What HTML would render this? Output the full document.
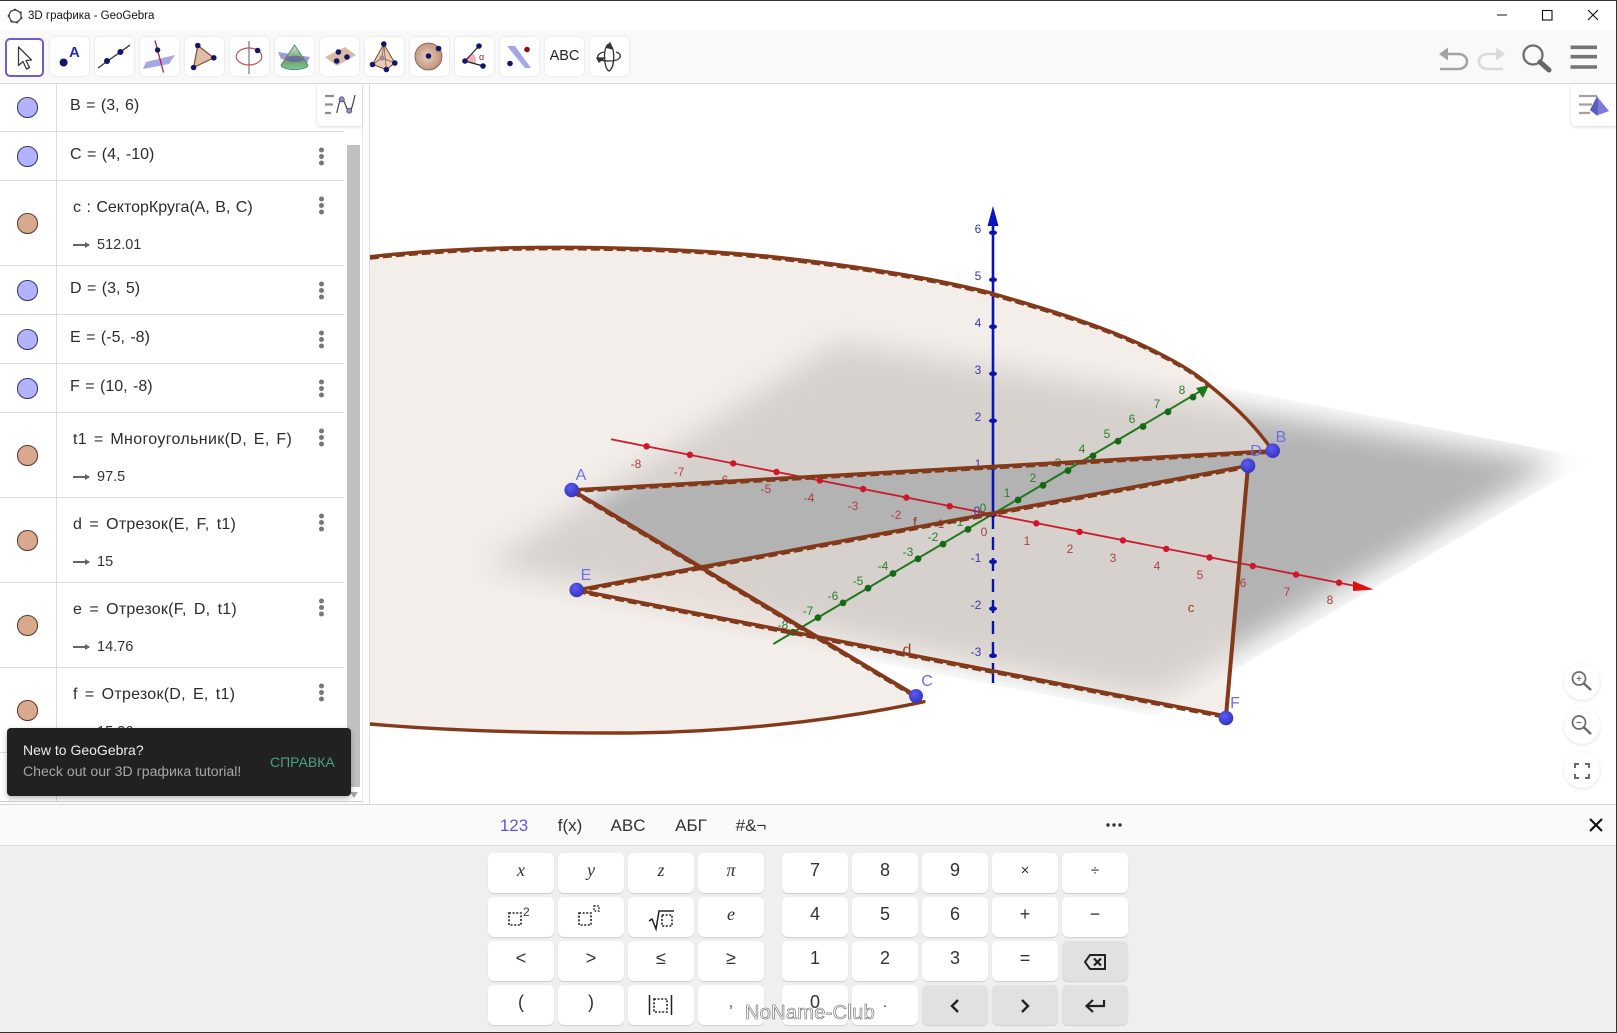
<!DOCTYPE html>
<html><head><meta charset="utf-8"><title>3D графика - GeoGebra</title>
<style>
html,body{margin:0;padding:0;background:#fff;width:1617px;height:1033px;overflow:hidden}
body{position:relative;font-family:"Liberation Sans",sans-serif;color:#222}
.a{position:absolute}
#tb{position:absolute;left:0;top:30px;width:1617px;height:53px;background:#f9f9f9;border-bottom:1px solid #dcdcdc}
.btn{position:absolute;top:37px;width:39px;height:39px;background:#fff;border-radius:5px;box-shadow:0 0 2px rgba(0,0,0,.14)}
.btn svg{position:absolute;left:0;top:0}
.row{position:absolute;left:0;width:344px;border-bottom:1px solid #dcdcdc;background:#fff}
.c{position:absolute;left:17px;width:18.5px;height:18.5px;border-radius:50%;border:1px solid #2f2f80;background:#b3b3fb}
.c.b{background:#d9a98f;border-color:#5a3524}
.t{position:absolute;font-size:16px;line-height:18px;white-space:nowrap;color:#2c2c2c;transform:translateY(-50%);word-spacing:1px;margin-top:1px}
.v{position:absolute;left:97px;font-size:14.5px;line-height:18px;color:#333;transform:translateY(-50%);margin-top:1px}
.ar{position:absolute;left:73px;width:16px;height:2px;background:#666}
.ar:after{content:"";position:absolute;right:-1px;top:-2px;border-left:5px solid #666;border-top:3px solid transparent;border-bottom:3px solid transparent}
.m{position:absolute;left:318.5px;width:5px;height:5px;border-radius:50%;background:#777;box-shadow:0 -6.5px 0 #777,0 6.5px 0 #777}
.k{position:absolute;width:66px;height:39.5px;background:#fff;border-radius:6px;box-shadow:0 1px 1px rgba(0,0,0,.14);text-align:center;line-height:35px;font-size:18px;color:#333}
.k svg{position:absolute;left:0;top:0}
.g{background:#e1e1e1}
.i{font-family:"Liberation Serif",serif;font-style:italic;font-size:18px}
.s{font-size:15px}
.tab{position:absolute;top:816px;font-size:17px;line-height:20px;color:#333;transform:translateX(-50%);white-space:nowrap}
.fab{position:absolute;width:36px;height:36px;border-radius:50%;background:#fff;box-shadow:0 1px 3px rgba(0,0,0,.12)}
svg text{font-family:"Liberation Sans",sans-serif}
</style></head><body>

<!-- Graphics view -->
<svg class="a" style="left:0;top:0" width="1617" height="1033" viewBox="0 0 1617 1033">
<defs>
<clipPath id="view"><rect x="370" y="84" width="1247" height="720"/></clipPath>
<clipPath id="pq"><polygon points="393,570 832,311 1593,459 1156,716"/></clipPath>
<filter id="bl" x="-20%" y="-30%" width="140%" height="160%"><feGaussianBlur stdDeviation="15"/></filter>
<radialGradient id="pt" cx="40%" cy="35%" r="70%"><stop offset="0" stop-color="#5c5cf0"/><stop offset="1" stop-color="#3232bc"/></radialGradient>
</defs>
<g clip-path="url(#view)">
<g clip-path="url(#pq)"><polygon filter="url(#bl)" fill="#b3b3b3" points="485,565 838,342 1560,462 1155,698"/></g>
<path d="M370,256.7C430,250 500,247 567.7,247.3C640,247.8 700,250 765.4,256C840,264 925,276 990,292.7C1060,313 1100,326 1138,343C1170,358 1195,372 1209,385C1240,410 1258,430 1272.7,450.7L571.7,490L916,700L924,701.7C830,722 720,733 616.7,733C530,733 440,730 370,724Z" fill="#eee3dd" fill-opacity=".62"/>
<polygon points="1248,465.7 576.7,590 1226,716" fill="#eee3dd" fill-opacity=".62"/>

<!-- y axis -->
<path d="M773.3,644L1199.5,391.7" stroke="#1e7a1e" stroke-width="2" fill="none"/>
<polygon points="1209,385 1196,388 1203,398" fill="#1a7a1a"/>
<g fill="#146914"><circle cx="793" cy="632.3" r="3.4"/><circle cx="818" cy="617.6" r="3.4"/><circle cx="843" cy="602.9" r="3.4"/><circle cx="868" cy="588.2" r="3.4"/><circle cx="893" cy="573.5" r="3.4"/><circle cx="918" cy="558.8" r="3.4"/><circle cx="943" cy="544.1" r="3.4"/><circle cx="968" cy="529.4" r="3.4"/><circle cx="1018" cy="500" r="3.4"/><circle cx="1043" cy="485.3" r="3.4"/><circle cx="1068" cy="470.6" r="3.4"/><circle cx="1093" cy="455.9" r="3.4"/><circle cx="1118" cy="441.2" r="3.4"/><circle cx="1143" cy="426.5" r="3.4"/><circle cx="1168" cy="411.8" r="3.4"/><circle cx="1193" cy="397.1" r="3.4"/></g>
<g font-size="12" fill="#2c7d2c" text-anchor="middle"><text x="783" y="629">-8</text><text x="808" y="615">-7</text><text x="833" y="600">-6</text><text x="858" y="585">-5</text><text x="883" y="570">-4</text><text x="908" y="556">-3</text><text x="933" y="541">-2</text><text x="958" y="526">-1</text><text x="1007" y="497">1</text><text x="1033" y="482">2</text><text x="1058" y="467">3</text><text x="1082" y="453">4</text><text x="1107" y="438">5</text><text x="1132" y="423">6</text><text x="1157" y="408">7</text><text x="1182" y="394">8</text><text x="983" y="512">0</text></g>

<!-- x axis -->
<path d="M611,439.3L1353,585.5" stroke="#c81e2c" stroke-width="1.8" fill="none"/>
<polygon points="1353,581 1373.5,589.5 1353,591" fill="#e01010"/>
<g fill="#d2152a"><circle cx="646.6" cy="446.3" r="3.2"/><circle cx="689.9" cy="454.8" r="3.2"/><circle cx="733.2" cy="463.4" r="3.2"/><circle cx="776.5" cy="472" r="3.2"/><circle cx="819.8" cy="480.5" r="3.2"/><circle cx="863.1" cy="489" r="3.2"/><circle cx="906.4" cy="497.6" r="3.2"/><circle cx="949.7" cy="506.2" r="3.2"/><circle cx="1036.3" cy="523.3" r="3.2"/><circle cx="1079.6" cy="531.8" r="3.2"/><circle cx="1122.9" cy="540.4" r="3.2"/><circle cx="1166.2" cy="548.9" r="3.2"/><circle cx="1209.5" cy="557.5" r="3.2"/><circle cx="1252.8" cy="566" r="3.2"/><circle cx="1296.1" cy="574.6" r="3.2"/><circle cx="1339" cy="582.7" r="3.2"/></g>
<g font-size="12" fill="#ad3f44" text-anchor="middle"><text x="636" y="468">-8</text><text x="679" y="476">-7</text><text x="723" y="484">-6</text><text x="766" y="493">-5</text><text x="809" y="502">-4</text><text x="853" y="510">-3</text><text x="896" y="519">-2</text><text x="939" y="528">-1</text><text x="984" y="536">0</text><text x="1027" y="545">1</text><text x="1070" y="553">2</text><text x="1113" y="562">3</text><text x="1157" y="570">4</text><text x="1200" y="579">5</text><text x="1243" y="587">6</text><text x="1287" y="596">7</text><text x="1330" y="604">8</text></g>

<!-- z axis -->
<path d="M993,225V514.7" stroke="#0a14b4" stroke-width="2.6"/>
<path d="M993,516V670" stroke="#0a14a4" stroke-width="2.4" stroke-dasharray="13,8"/>
<path d="M993,670V683" stroke="#0a14a4" stroke-width="2.4"/>
<polygon points="993,206 987.5,226 998.5,226" fill="#0a14c0"/>
<g fill="#0a14a8"><ellipse cx="993" cy="232.7" rx="4" ry="2.3"/><ellipse cx="993" cy="279.7" rx="4" ry="2.3"/><ellipse cx="993" cy="326.7" rx="4" ry="2.3"/><ellipse cx="993" cy="373.7" rx="4" ry="2.3"/><ellipse cx="993" cy="420.7" rx="4" ry="2.3"/><ellipse cx="993" cy="467.7" rx="4" ry="2.3"/><ellipse cx="993" cy="561.7" rx="4" ry="2.3"/><ellipse cx="993" cy="608.7" rx="4" ry="2.3"/><ellipse cx="993" cy="655.7" rx="4" ry="2.3"/><circle cx="993" cy="514.7" r="3"/></g>
<g font-size="12" fill="#3a3aa4" text-anchor="middle"><text x="978" y="233">6</text><text x="978" y="280">5</text><text x="978" y="327">4</text><text x="978" y="374">3</text><text x="978" y="421">2</text><text x="978" y="468">1</text><text x="977" y="515">0</text><text x="976" y="562">-1</text><text x="976" y="609">-2</text><text x="976" y="656">-3</text></g>

<!-- shape edges: dashed under-stroke then solid -->
<g fill="none" stroke="#7d3a18" stroke-width="2.2" stroke-dasharray="9,4" transform="translate(0,2)">
<path d="M370,256.7C430,250 500,247 567.7,247.3C640,247.8 700,250 765.4,256C840,264 925,276 990,292.7C1060,313 1100,326 1138,343C1170,358 1195,372 1209,385"/>
<path d="M571.7,490L1272.7,450.7"/><path d="M571.7,490L916,696"/><path d="M576.7,590L1248,465.7"/><path d="M576.7,590L1226,716"/>
</g>
<g fill="none" stroke="#83391a" stroke-width="3.4" stroke-linecap="round">
<path d="M370,256.7C430,250 500,247 567.7,247.3C640,247.8 700,250 765.4,256C840,264 925,276 990,292.7C1060,313 1100,326 1138,343C1170,358 1195,372 1209,385C1240,410 1258,430 1272.7,450.7"/>
<path d="M370,724C440,730 530,733 616.7,733C720,733 830,722 924,701.7"/>
<path d="M571.7,490L1272.7,450.7"/><path d="M571.7,490L916,696" stroke-width="4"/><path d="M576.7,590L1248,465.7"/><path d="M576.7,590L1226,716"/>
<path d="M1248,465.7L1226,716" stroke-width="4"/>
</g>

<!-- points -->
<circle cx="571.7" cy="490" r="7.3" fill="url(#pt)"/><circle cx="1272.7" cy="450.7" r="7.3" fill="url(#pt)"/><circle cx="916" cy="696" r="7" fill="url(#pt)"/><circle cx="1248" cy="465.7" r="7.3" fill="url(#pt)"/><circle cx="576.7" cy="590" r="7.3" fill="url(#pt)"/><circle cx="1226" cy="718" r="7.3" fill="url(#pt)"/>
<g font-size="16" fill="#6e6ee4" text-anchor="middle"><text x="581" y="480">A</text><text x="1281" y="442">B</text><text x="927" y="686">C</text><text x="1256" y="456">D</text><text x="586" y="580">E</text><text x="1235" y="708">F</text></g>
<g fill="#8c3d24" text-anchor="middle"><text x="1191" y="612" font-size="13">c</text><text x="907" y="655" font-size="16">d</text><text x="915" y="527" font-size="14">f</text></g>
</g>
</svg>

<!-- Title bar -->
<svg class="a" style="left:7px;top:8px" width="16" height="16" viewBox="0 0 16 16"><polygon points="8,1.5 13.5,4.5 14.5,10 10,14.5 4.5,13.5 1.5,8 3.5,3.5" fill="none" stroke="#444" stroke-width="1.3"/><g fill="#444"><circle cx="8" cy="1.8" r="1.2"/><circle cx="13.6" cy="4.6" r="1.2"/><circle cx="14.3" cy="10" r="1.2"/><circle cx="10" cy="14.3" r="1.2"/><circle cx="4.5" cy="13.5" r="1.2"/><circle cx="1.8" cy="8" r="1.2"/></g></svg>
<div class="a" style="left:28px;top:9px;font-size:11.5px;line-height:14px;color:#111">3D графика - GeoGebra</div>
<svg class="a" style="left:1490px;top:5px" width="115" height="20" viewBox="0 0 115 20"><path d="M7,10H17" stroke="#111" stroke-width="1"/><rect x="52.5" y="5.5" width="9.5" height="9.5" fill="none" stroke="#111" stroke-width="1.1"/><path d="M98,5L108,15M108,5L98,15" stroke="#111" stroke-width="1.1"/></svg>
<div class="a" style="left:0;top:0;width:1617px;height:1px;background:#333"></div>

<!-- Toolbar -->
<div id="tb"></div>
<div class="btn" style="left:5px;box-shadow:none;border:2px solid #6c5fc7;width:35px;height:35px;top:37.5px"><svg width="35" height="35" style="left:-2px;top:-2px;overflow:visible"><path d="M13.5,9V27.5L18,23.5L21.5,31L24.5,29.5L21,22.5L26.5,22Z" fill="#fff" stroke="#3a3a3a" stroke-width="1.3" stroke-linejoin="round"/></svg></div>
<div class="btn" style="left:50px"><svg width="39" height="39"><circle cx="13.6" cy="25.5" r="4" fill="#14146a"/><text x="19" y="20" font-size="15" font-weight="bold" fill="#2a2ac0">A</text></svg></div>
<div class="btn" style="left:95px"><svg width="39" height="39"><path d="M3,31L35,8" stroke="#333" stroke-width="1.3"/><circle cx="12" cy="24" r="3" fill="#14146a"/><circle cx="25.4" cy="15" r="3" fill="#14146a"/></svg></div>
<div class="btn" style="left:140px"><svg width="39" height="39"><polygon points="6,25 35,18 29,27 3,32" fill="#a6a6ea"/><path d="M15,3.5L23.5,35.5" stroke="#b01a4a" stroke-width="1.3"/><circle cx="17.6" cy="13" r="2.7" fill="#14146a"/></svg></div>
<div class="btn" style="left:185px"><svg width="39" height="39"><polygon points="12.8,8.5 28.8,20.8 8.6,30.5" fill="#e0bda8" stroke="#8a4a28" stroke-width="1.2"/><circle cx="12.8" cy="8.5" r="2.8" fill="#14146a"/><circle cx="28.8" cy="20.8" r="2.8" fill="#14146a"/><circle cx="8.6" cy="30.5" r="2.8" fill="#14146a"/></svg></div>
<div class="btn" style="left:230px"><svg width="39" height="39"><path d="M19,4V37" stroke="#9a9a9a" stroke-width="1.6"/><ellipse cx="19" cy="19.5" rx="12.8" ry="8.5" fill="none" stroke="#c25050" stroke-width="1.2"/><circle cx="27.6" cy="13.5" r="2.8" fill="#14146a"/></svg></div>
<div class="btn" style="left:275px"><svg width="39" height="39"><defs><linearGradient id="cg" x1="0" y1="0" x2="0" y2="1"><stop offset="0" stop-color="#cfe6cf"/><stop offset=".6" stop-color="#6aa07a"/><stop offset="1" stop-color="#79c987"/></linearGradient></defs><polygon points="3,15 35,20 32,26 6,22" fill="#9c9ce0"/><path d="M19.6,8L33,28C33,34 6,34 6,28Z" fill="url(#cg)" stroke="#4f7a58" stroke-width=".8"/><ellipse cx="19.6" cy="22" rx="8.5" ry="3" fill="#5a76a8" stroke="#b06060" stroke-width=".8"/></svg></div>
<div class="btn" style="left:320px"><svg width="39" height="39"><polygon points="5,20 25,10 36,18 17,29" fill="#d9bca6"/><circle cx="18.4" cy="15" r="2.8" fill="#14146a"/><circle cx="27" cy="20" r="2.8" fill="#14146a"/><circle cx="16.7" cy="24" r="2.8" fill="#14146a"/></svg></div>
<div class="btn" style="left:365px"><svg width="39" height="39"><polygon points="18.8,7 7.5,27.5 21.4,32.5 29.8,26" fill="#e6cdb9" stroke="#7a4a2a" stroke-width="1"/><path d="M18.8,7L17,21L7.5,27.5M17,21L29.8,26M18.8,7L21.4,32.5" stroke="#8a5a3a" stroke-width=".8" fill="none"/><circle cx="17" cy="21" r="2.6" fill="#a08a90"/><circle cx="18.8" cy="7" r="2.8" fill="#14146a"/><circle cx="7.5" cy="27.5" r="2.8" fill="#14146a"/><circle cx="29.8" cy="26" r="2.8" fill="#14146a"/><circle cx="21.4" cy="32.5" r="2.8" fill="#14146a"/></svg></div>
<div class="btn" style="left:410px"><svg width="39" height="39"><defs><radialGradient id="sg" cx="45%" cy="50%" r="60%"><stop offset="0" stop-color="#e8cdbd"/><stop offset="1" stop-color="#b98a72"/></radialGradient></defs><circle cx="18.5" cy="19.5" r="13.5" fill="url(#sg)" stroke="#7a5a4a" stroke-width=".8"/><circle cx="18.5" cy="19" r="2.8" fill="#14146a"/><circle cx="28.6" cy="11.5" r="2.8" fill="#14146a"/></svg></div>
<div class="btn" style="left:455px"><svg width="39" height="39"><path d="M10,24L17.5,16A11,11 0 0 1 20.5,26.5Z" fill="#f2b0b8"/><path d="M24,9L10,24L28,29" fill="none" stroke="#222" stroke-width="1.2"/><circle cx="24" cy="9" r="2.8" fill="#14146a"/><circle cx="10" cy="24" r="2.8" fill="#14146a"/><circle cx="28" cy="29" r="2.8" fill="#14146a"/><text x="24" y="23" font-size="9" fill="#b02020">α</text></svg></div>
<div class="btn" style="left:500px"><svg width="39" height="39"><polygon points="7,9 15,9 31,31 25,31" fill="#a6a6e6"/><circle cx="27" cy="12.5" r="2.8" fill="#8a1020"/><circle cx="10" cy="26.5" r="2.8" fill="#14146a"/></svg></div>
<div class="btn" style="left:545px;text-align:center;line-height:38px;font-size:14.5px;color:#222">ABC</div>
<div class="btn" style="left:590px"><svg width="39" height="39" fill="none" stroke="#333" stroke-width="1.3"><path d="M14,15C5,17 5,24 19,24C32,24 33,17 26,15"/><path d="M19,7C13,8 13,31 19,34C25,31 25,12 21,9"/><path d="M20,6L22.5,12L17,10.5Z" fill="#333"/><path d="M7,21L14,21L9,25Z" fill="#333"/></svg></div>

<svg class="a" style="left:1435px;top:40px" width="175" height="38" viewBox="0 0 175 38">
<path d="M6,14H23C35,14 35,29 23,29H5" fill="none" stroke="#a3a3a3" stroke-width="2.6"/><polygon points="4,14 13,7.5 13,20.5" fill="#a3a3a3"/>
<path d="M68,14H53C41,14 41,29 53,29H68" fill="none" stroke="#dadada" stroke-width="2.6"/><polygon points="70,14 61,7.5 61,20.5" fill="#dadada"/>
<circle cx="98" cy="15" r="9.5" fill="none" stroke="#6e6e6e" stroke-width="2.3"/><path d="M105,22L114,30" stroke="#666" stroke-width="5" stroke-linecap="round"/>
<path d="M135.5,7.3H162M135.5,16.7H162M135.5,27H162" stroke="#757575" stroke-width="3.6"/>
</svg>

<!-- Algebra view -->
<div class="a" style="left:369px;top:84px;width:1px;height:720px;background:#dedede"></div>
<div class="a" style="left:362px;top:84px;width:1px;height:720px;background:#e8e8e8"></div>
<div class="a" style="left:0;top:84px;width:345px;height:717px;background:#fff"></div>
<div class="row" style="top:84px;height:47px"></div>
<div class="row" style="top:132px;height:48px"></div>
<div class="row" style="top:181px;height:84px"></div>
<div class="row" style="top:266px;height:48px"></div>
<div class="row" style="top:315px;height:48px"></div>
<div class="row" style="top:364px;height:48px"></div>
<div class="row" style="top:413px;height:84px"></div>
<div class="row" style="top:498px;height:84px"></div>
<div class="row" style="top:583px;height:84px"></div>
<div class="row" style="top:668px;height:84px"></div>
<div class="a" style="left:56px;top:84px;width:1px;height:717px;background:#dcdcdc"></div>
<div class="a" style="left:346.5px;top:145px;width:13.5px;height:642px;background:#c0c0c0"></div>
<div class="a" style="left:0;top:801px;width:362px;height:1px;background:#cfcfcf"></div>
<svg class="a" style="left:349px;top:791px" width="10" height="8"><polygon points="1,1 9,1 5,7" fill="#a8a8a8"/></svg>

<div class="c" style="top:97px"></div><div class="t" style="left:70px;top:105px">B = (3, 6)</div>
<div class="c" style="top:146px"></div><div class="t" style="left:70px;top:154px">C = (4, -10)</div><div class="m" style="top:153.5px"></div>
<div class="c b" style="top:213px"></div><div class="t" style="left:73px;top:206.5px">c : СекторКруга(A, B, C)</div><div class="ar" style="top:244px"></div><div class="v" style="top:244px">512.01</div><div class="m" style="top:202.5px"></div>
<div class="c" style="top:280px"></div><div class="t" style="left:70px;top:288px">D = (3, 5)</div><div class="m" style="top:287.5px"></div>
<div class="c" style="top:329px"></div><div class="t" style="left:70px;top:337px">E = (-5, -8)</div><div class="m" style="top:336.5px"></div>
<div class="c" style="top:378px"></div><div class="t" style="left:70px;top:386px">F = (10, -8)</div><div class="m" style="top:385.5px"></div>
<div class="c b" style="top:445px"></div><div class="t" style="left:73px;top:438.5px;word-spacing:2px;letter-spacing:.35px">t1 = Многоугольник(D, E, F)</div><div class="ar" style="top:476px"></div><div class="v" style="top:475.5px">97.5</div><div class="m" style="top:435px"></div>
<div class="c b" style="top:530px"></div><div class="t" style="left:73px;top:523.5px;word-spacing:2.5px;letter-spacing:.25px">d = Отрезок(E, F, t1)</div><div class="ar" style="top:561px"></div><div class="v" style="top:561px">15</div><div class="m" style="top:519.5px"></div>
<div class="c b" style="top:615px"></div><div class="t" style="left:73px;top:608.5px;word-spacing:2.5px;letter-spacing:.25px">e = Отрезок(F, D, t1)</div><div class="ar" style="top:646px"></div><div class="v" style="top:646px">14.76</div><div class="m" style="top:604.5px"></div>
<div class="c b" style="top:700px"></div><div class="t" style="left:73px;top:693.5px;word-spacing:2.5px;letter-spacing:.25px">f = Отрезок(D, E, t1)</div><div class="v" style="top:731px">15.26</div><div class="m" style="top:689.5px"></div>

<!-- view-toggle buttons -->
<div class="a" style="left:317px;top:84px;width:45px;height:42px;background:#fff;border-radius:0 0 0 5px;box-shadow:0 1px 3px rgba(0,0,0,.16)"></div>
<svg class="a" style="left:317px;top:84px" width="45" height="42" viewBox="317 84 45 42"><path d="M325,96H334M325,104.5H333M325,113H331" stroke="#8c8c8c" stroke-width="2.2"/><path d="M336.7,113C338.5,106 339.5,99.3 341.7,99.3C345,99.3 346,110.7 349.3,110.7C352,110.7 353,103 355,95" fill="none" stroke="#444" stroke-width="1.2"/><circle cx="341.7" cy="99.3" r="2.6" fill="#8a8ad0" stroke="#444" stroke-width=".6"/><circle cx="349.3" cy="110.7" r="2.6" fill="#8a8ad0" stroke="#444" stroke-width=".6"/></svg>
<div class="a" style="left:1571px;top:84px;width:46px;height:42px;background:#fff;border-radius:0 0 0 5px;box-shadow:0 1px 3px rgba(0,0,0,.16)"></div>
<svg class="a" style="left:1571px;top:84px" width="46" height="42" viewBox="1571 84 46 42"><path d="M1579,96H1597M1579,104.5H1592M1579,113H1590" stroke="#a3a3a3" stroke-width="2.2"/><polygon points="1597,96.5 1590,110 1597,115.5 1609,111" fill="#7c7cd8"/><path d="M1597,96.5L1597,115.5" stroke="#4d4da8" stroke-width="1"/><polygon points="1597,96.5 1590,110 1597,115.5" fill="#5c5cc0"/></svg>

<!-- zoom buttons -->
<div class="fab" style="left:1564px;top:664px"></div><div class="fab" style="left:1564px;top:708px"></div><div class="fab" style="left:1564px;top:752px"></div>
<svg class="a" style="left:1564px;top:664px" width="36" height="124" viewBox="0 0 36 124" fill="none" stroke="#6a6a6a">
<circle cx="15" cy="14.5" r="6.5" stroke-width="1.7"/><path d="M20,19.5L27,26" stroke-width="2.4"/><path d="M12.5,14.5H17.5M15,12V17" stroke-width="1"/>
<circle cx="15" cy="58.5" r="6.5" stroke-width="1.7"/><path d="M20,63.5L27,70" stroke-width="2.4"/><path d="M12.5,58.5H17.5" stroke-width="1.2"/>
<path d="M11,104V100H15M21,100H25V104M25,110V114H21M15,114H11V110" stroke-width="2"/></svg>

<!-- Snackbar -->
<div class="a" style="left:7px;top:728px;width:344px;height:68px;background:#212121;border-radius:4px;box-shadow:0 2px 6px rgba(0,0,0,.3)"></div>
<div class="a" style="left:23px;top:742px;font-size:14px;line-height:17px;color:#ececec">New to GeoGebra?</div>
<div class="a" style="left:23px;top:763px;font-size:14.1px;line-height:17px;color:#a6a6a6">Check out our 3D графика tutorial!</div>
<div class="a" style="left:270px;top:754px;font-size:14px;line-height:17px;color:#46a184">СПРАВКА</div>

<!-- Keyboard -->
<div class="a" style="left:0;top:804px;width:1617px;height:1px;background:#d6d6d6"></div>
<div class="a" style="left:0;top:805px;width:1617px;height:40px;background:#fafafa;border-bottom:1px solid #dcdcdc"></div>
<div class="a" style="left:0;top:846px;width:1617px;height:186px;background:#efefef"></div>
<div class="tab" style="left:514px;color:#6557d2">123</div><div class="tab" style="left:570px">f(x)</div><div class="tab" style="left:628px">ABC</div><div class="tab" style="left:691px">АБГ</div><div class="tab" style="left:751px">#&amp;¬</div>
<svg class="a" style="left:1105px;top:821px" width="18" height="8"><g fill="#333"><circle cx="3" cy="4" r="1.7"/><circle cx="9" cy="4" r="1.7"/><circle cx="15" cy="4" r="1.7"/></g></svg>
<svg class="a" style="left:1588px;top:817px" width="16" height="16"><path d="M2,2L14,14M14,2L2,14" stroke="#111" stroke-width="2.2"/></svg>

<div class="k i" style="left:488px;top:853px">x</div><div class="k i" style="left:558px;top:853px">y</div><div class="k i" style="left:628px;top:853px">z</div><div class="k i" style="left:698px;top:853px">π</div>
<div class="k" style="left:782px;top:853px">7</div><div class="k" style="left:852px;top:853px">8</div><div class="k" style="left:922px;top:853px">9</div><div class="k s" style="left:992px;top:853px">×</div><div class="k s" style="left:1062px;top:853px">÷</div>

<div class="k" style="left:488px;top:897px"><svg width="66" height="40"><rect x="21" y="16" width="12" height="12" fill="none" stroke="#222" stroke-width="1.6" stroke-dasharray="2,1.6"/><text x="35" y="19" font-size="12" fill="#333">2</text></svg></div>
<div class="k" style="left:558px;top:897px"><svg width="66" height="40"><rect x="21" y="16" width="12" height="12" fill="none" stroke="#222" stroke-width="1.6" stroke-dasharray="2,1.6"/><rect x="36" y="9" width="5" height="5" fill="none" stroke="#222" stroke-width="1.4" stroke-dasharray="1.6,1.6"/></svg></div>
<div class="k" style="left:628px;top:897px"><svg width="66" height="40"><path d="M21,24L24,22L28,32L31,14H46" fill="none" stroke="#222" stroke-width="1.5"/><rect x="34" y="18" width="10" height="11" fill="none" stroke="#222" stroke-width="1.6" stroke-dasharray="2,1.6"/></svg></div>
<div class="k i" style="left:698px;top:897px">e</div>
<div class="k" style="left:782px;top:897px">4</div><div class="k" style="left:852px;top:897px">5</div><div class="k" style="left:922px;top:897px">6</div><div class="k" style="left:992px;top:897px">+</div><div class="k" style="left:1062px;top:897px">−</div>

<div class="k" style="left:488px;top:941px">&lt;</div><div class="k" style="left:558px;top:941px">&gt;</div><div class="k" style="left:628px;top:941px">≤</div><div class="k" style="left:698px;top:941px">≥</div>
<div class="k" style="left:782px;top:941px">1</div><div class="k" style="left:852px;top:941px">2</div><div class="k" style="left:922px;top:941px">3</div><div class="k" style="left:992px;top:941px">=</div>
<div class="k g" style="left:1062px;top:941px"><svg width="66" height="40"><path d="M28,14H43V28H28L23,21Z" fill="none" stroke="#222" stroke-width="2"/><path d="M32,17.5L39,24.5M39,17.5L32,24.5" stroke="#222" stroke-width="2.2"/></svg></div>

<div class="k" style="left:488px;top:985px">(</div><div class="k" style="left:558px;top:985px">)</div>
<div class="k" style="left:628px;top:985px"><svg width="66" height="40"><path d="M21.5,10V30M43.5,10V30" stroke="#222" stroke-width="1.5"/><rect x="26" y="14" width="13" height="13" fill="none" stroke="#222" stroke-width="1.6" stroke-dasharray="2,1.6"/></svg></div>
<div class="k s" style="left:698px;top:985px">,</div><div class="k" style="left:782px;top:985px">0</div><div class="k s" style="left:852px;top:985px">.</div>
<div class="k g" style="left:922px;top:985px"><svg width="66" height="40"><path d="M36,15L30,21L36,27" fill="none" stroke="#222" stroke-width="2.4"/></svg></div>
<div class="k g" style="left:992px;top:985px"><svg width="66" height="40"><path d="M30,15L36,21L30,27" fill="none" stroke="#222" stroke-width="2.4"/></svg></div>
<div class="k g" style="left:1062px;top:985px"><svg width="66" height="40"><path d="M42,15V21H25M31,15L24.5,21L31,27" fill="none" stroke="#222" stroke-width="2.2"/></svg></div>

<div class="a" style="left:743px;top:1002px;width:134px;text-align:center;font-size:20px;letter-spacing:.3px;line-height:22px;color:#fff;-webkit-text-stroke:.6px #666;white-space:nowrap">NoName-Club</div>

<div class="a" style="left:1615.5px;top:0;width:1.5px;height:1033px;background:#333"></div>
<div class="a" style="left:0;top:1031.5px;width:1617px;height:1.5px;background:#333"></div>
</body></html>
